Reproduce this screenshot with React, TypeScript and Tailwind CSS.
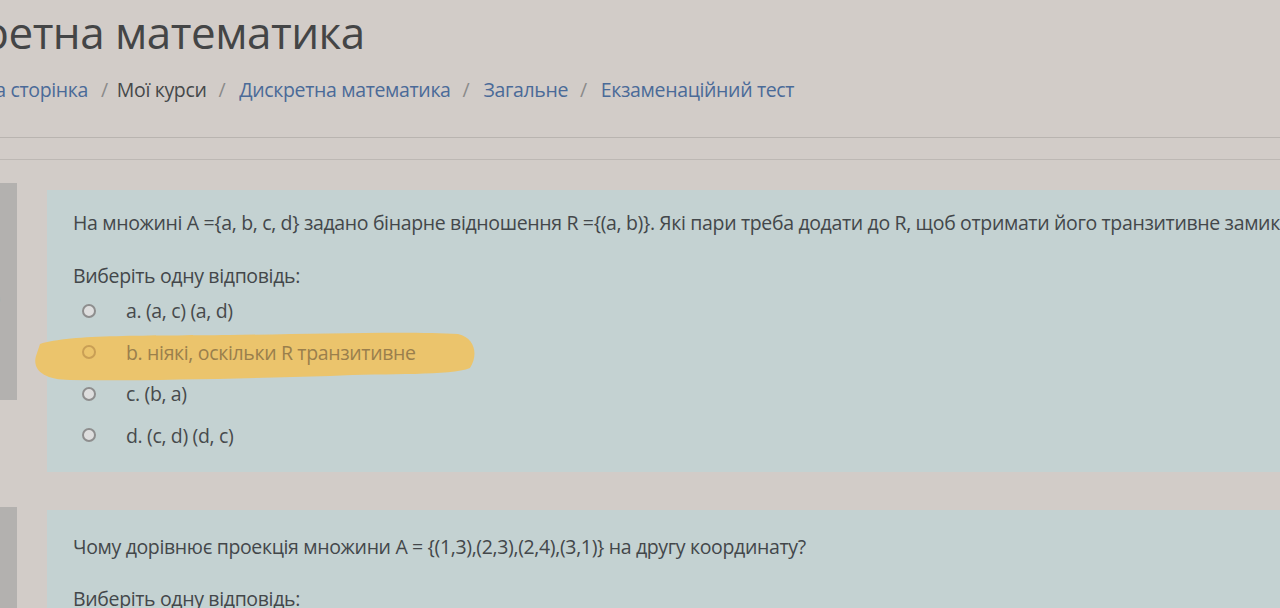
import React from "react";

function Radio({ hl }: { hl?: boolean }) {
  return (
    <span
      className={
        hl
          ? "inline-block h-[14px] w-[14px] shrink-0 rounded-full border-[2px] border-[#c99f55] bg-transparent"
          : "inline-block h-[14px] w-[14px] shrink-0 rounded-full border-[2px] border-[#8e8e8e] bg-[#dedede]"
      }
    />
  );
}

function Option({ label, hl }: { label: string; hl?: boolean }) {
  return (
    <div className="flex h-[41.5px] items-center">
      <div className="flex w-[53px] justify-center">
        <Radio hl={hl} />
      </div>
      <span className={hl ? "ml-[11px] text-[#9a7f4c]" : "ml-[11px] text-[#474a4c]"}>{label}</span>
    </div>
  );
}

export default function App() {
  return (
    <div className="relative h-[608px] w-[1280px] overflow-hidden bg-[#d2ccc8] font-['Open_Sans',sans-serif] text-[#43474a]">
      {/* header */}
      <div className="h-[183px]">
        <h1 className="flex pt-[6px] text-[44px] font-normal leading-[52px] tracking-[-0.5px] text-[#444546]">
          <span className="flex w-0 justify-end ml-[-18px]">Диск</span>
          <span className="whitespace-nowrap">ретна математика</span>
        </h1>
        <nav className="mt-[19px] flex items-center whitespace-nowrap text-[19.5px] leading-[26px] tracking-[-0.35px]">
          <span className="flex w-[88px] shrink-0 justify-end text-[#4a6a98]">Головна сторінка</span>
          <span className="ml-[13px] text-[#8a8a8a]">/</span>
          <span className="ml-[9px] text-[#45484a]">Мої курси</span>
          <span className="ml-[12px] text-[#8a8a8a]">/</span>
          <span className="ml-[14px] text-[#4a6a98]">Дискретна математика</span>
          <span className="ml-[12px] text-[#8a8a8a]">/</span>
          <span className="ml-[14px] text-[#4a6a98]">Загальне</span>
          <span className="ml-[12px] text-[#8a8a8a]">/</span>
          <span className="ml-[14px] text-[#4a6a98]">Екзаменаційний тест</span>
        </nav>
        <div className="mt-[34px] h-px bg-[#b9b4b0]" />
        <div className="mt-[21px] h-px bg-[#bdb8b4]" />
      </div>

      {/* question 1 */}
      <div className="flex items-start">
        <div className="relative h-[217px] w-[17px] shrink-0 bg-[#b3b1af]">
          <span className="absolute left-[-3px] top-[28px] text-[12px] text-[#555]">.</span>
          <span className="absolute left-[-4px] top-[104px] text-[14px] text-[#555]">)</span>
        </div>
        <div className="relative ml-[30px] mt-[7px] h-[282px] flex-1 bg-[#c4d2d2] pl-[26px] pt-[20px]">
          {/* highlighter stroke */}
          <svg className="pointer-events-none absolute left-[-17px] top-[136px]" width="450" height="62" viewBox="0 0 450 62">
            <path
              d="M10 18 C 40 8, 120 10, 200 9 C 280 8, 380 5, 428 8 C 446 12, 448 30, 440 42 C 420 50, 360 47, 300 50 C 220 52, 120 55, 40 54 C 14 54, 2 44, 6 30 Z"
              fill="#ebc46c"
            />
          </svg>
          <p className="whitespace-nowrap text-[19.5px] leading-[26px] tracking-[-0.35px]">
            На множині A ={"{"}a, b, c, d{"}"} задано бінарне відношення R ={"{"}(a, b){"}"}. Які пари треба додати до R, щоб отримати його транзитивне замикання?
          </p>
          <p className="mt-[27px] text-[19.5px] leading-[26px] tracking-[-0.35px]">Виберіть одну відповідь:</p>
          <div className="relative z-10 ml-[-11px] mt-[1px] text-[19.5px] tracking-[-0.35px]">
            <Option label="a. (a, c) (a, d)" />
            <Option label="b. ніякі, оскільки R транзитивне" hl />
            <Option label="c. (b, a)" />
            <Option label="d. (c, d) (d, c)" />
          </div>
        </div>
      </div>

      {/* question 2 */}
      <div className="mt-[35px] flex items-start">
        <div className="h-[120px] w-[17px] shrink-0 bg-[#b3b1af]" />
        <div className="ml-[30px] mt-[3px] h-[120px] flex-1 bg-[#c4d2d2] pl-[26px] pt-[24px]">
          <p className="whitespace-nowrap text-[19.5px] leading-[26px] tracking-[-0.35px]">
            Чому дорівнює проекція множини A = {"{"}(1,3),(2,3),(2,4),(3,1){"}"} на другу координату?
          </p>
          <p className="mt-[26px] text-[19.5px] leading-[26px] tracking-[-0.35px]">Виберіть одну відповідь:</p>
        </div>
      </div>
    </div>
  );
}
